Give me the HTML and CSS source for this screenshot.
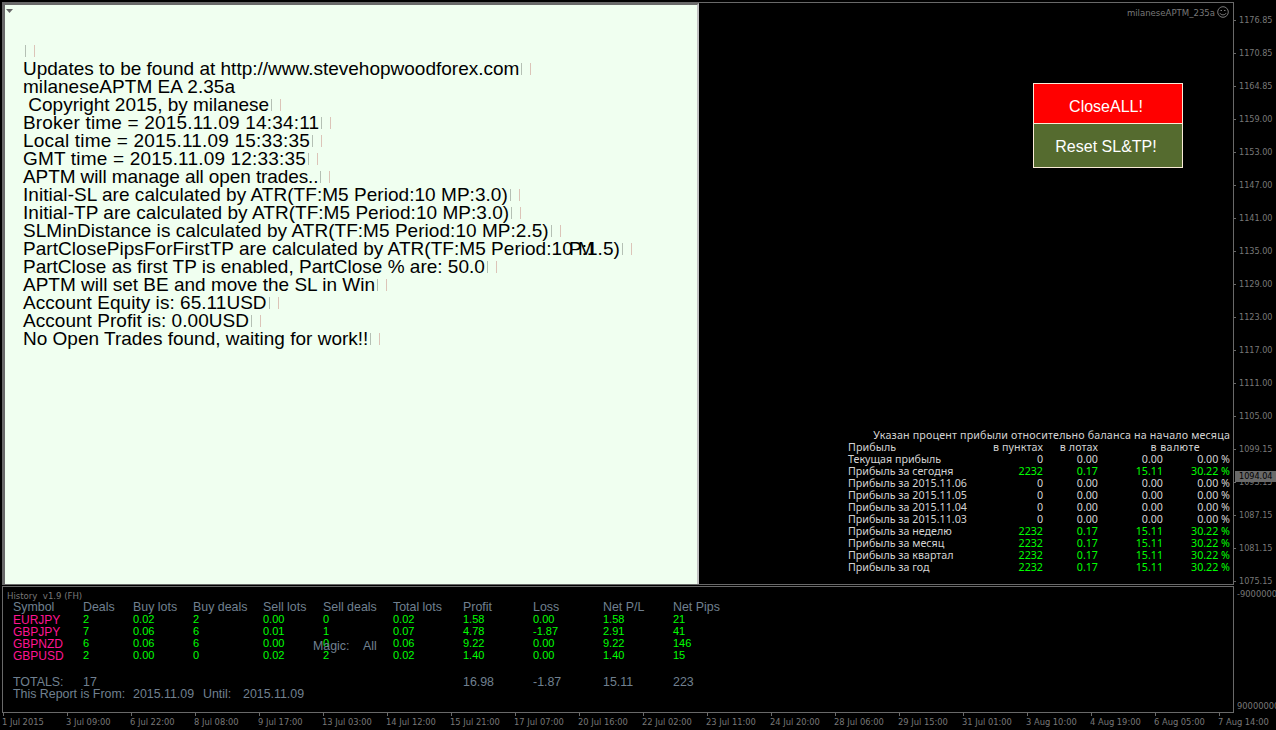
FILE: index.html
```
<!DOCTYPE html>
<html lang="en">
<head>
  <meta charset="UTF-8" />
  <title>milaneseAPTM_235a</title>
  <meta name="viewport" content="width=device-width, initial-scale=1.0" />
  <link rel="stylesheet" href="styles.css">
</head>
<body>
  <div class="terminal">
    <main class="chart">
      <section class="note">
        <svg class="note-arrow" width="7" height="4" viewBox="0 0 7 4"><path d="M0 0h7L3.5 4z" fill="#696969"/></svg>
        <p><i class="eol"></i></p>
        <p>Updates to be found at http://www.stevehopwoodforex.com<i class="eol"></i></p>
        <p class="loose">milaneseAPTM EA 2.35a</p>
        <p>&nbsp;Copyright 2015, by milanese<i class="eol"></i></p>
        <p class="wide">Broker time = 2015.11.09 14:34:11<i class="eol"></i></p>
        <p class="wide">Local time = 2015.11.09 15:33:35<i class="eol"></i></p>
        <p class="wide">GMT time = 2015.11.09 12:33:35<i class="eol"></i></p>
        <p class="tight">APTM will manage all open trades..<i class="eol"></i></p>
        <p class="loose">Initial-SL are calculated by ATR(TF:M5 Period:10 MP:3.0)<i class="eol"></i></p>
        <p class="loose">Initial-TP are calculated by ATR(TF:M5 Period:10 MP:3.0)<i class="eol"></i></p>
        <p class="loose">SLMinDistance is calculated by ATR(TF:M5 Period:10 MP:2.5)<i class="eol"></i></p>
        <p class="loose">PartClosePipsForFirstTP are calculated by ATR(TF:M5 Period:10 M<span class="overrun">P:1.5)</span><i class="eol"></i></p>
        <p>PartClose as first TP is enabled, PartClose % are: 50.0<i class="eol"></i></p>
        <p>APTM will set BE and move the SL in Win<i class="eol"></i></p>
        <p class="loose">Account Equity is: 65.11USD<i class="eol"></i></p>
        <p class="loose">Account Profit is: 0.00USD<i class="eol"></i></p>
        <p>No Open Trades found, waiting for work!!<i class="eol"></i></p>
      </section>

      <section class="side">
        <div class="expert">
          <span>milaneseAPTM_235a</span>
          <svg width="12" height="12" viewBox="0 0 12 12" fill="none" stroke="#787878">
            <circle cx="6" cy="6" r="5.3"/>
            <path d="M3 7.2c.8 2.2 5.2 2.2 6 0"/>
            <path d="M3.500 4.500h1.500M7 4.500h1.500" stroke-width="1.200"/>
          </svg>
        </div>

        <div class="buttons">
          <button class="close-all">CloseALL!</button>
          <button class="reset">Reset SL&amp;TP!</button>
        </div>

        <div class="profit">
          <div class="profit-title">Указан процент прибыли относительно баланса на начало месяца</div>
          <div class="profit-row head"><span>Прибыль</span><span>в пунктах</span><span>в лотах</span><span class="currency">в валюте</span></div>
          <div class="profit-row"><span>Текущая прибыль</span><span>0</span><span>0.00</span><span>0.00</span><span>0.00 %</span></div>
          <div class="profit-row up"><span>Прибыль за сегодня</span><span>2232</span><span>0.17</span><span>15.11</span><span>30.22 %</span></div>
          <div class="profit-row"><span>Прибыль за 2015.11.06</span><span>0</span><span>0.00</span><span>0.00</span><span>0.00 %</span></div>
          <div class="profit-row"><span>Прибыль за 2015.11.05</span><span>0</span><span>0.00</span><span>0.00</span><span>0.00 %</span></div>
          <div class="profit-row"><span>Прибыль за 2015.11.04</span><span>0</span><span>0.00</span><span>0.00</span><span>0.00 %</span></div>
          <div class="profit-row"><span>Прибыль за 2015.11.03</span><span>0</span><span>0.00</span><span>0.00</span><span>0.00 %</span></div>
          <div class="profit-row up"><span>Прибыль за неделю</span><span>2232</span><span>0.17</span><span>15.11</span><span>30.22 %</span></div>
          <div class="profit-row up"><span>Прибыль за месяц</span><span>2232</span><span>0.17</span><span>15.11</span><span>30.22 %</span></div>
          <div class="profit-row up"><span>Прибыль за квартал</span><span>2232</span><span>0.17</span><span>15.11</span><span>30.22 %</span></div>
          <div class="profit-row up"><span>Прибыль за год</span><span>2232</span><span>0.17</span><span>15.11</span><span>30.22 %</span></div>
        </div>
      </section>
    </main>

    <aside class="prices">
      <div>1176.85</div>
      <div>1170.85</div>
      <div>1164.85</div>
      <div>1159.00</div>
      <div>1153.00</div>
      <div>1147.00</div>
      <div>1141.00</div>
      <div>1135.00</div>
      <div>1129.00</div>
      <div>1123.00</div>
      <div>1117.00</div>
      <div>1111.00</div>
      <div>1105.00</div>
      <div>1099.15</div>
      <div>1093.15<span class="bid">1094.04</span></div>
      <div>1087.15</div>
      <div>1081.15</div>
      <div>1075.15</div>
    </aside>

    <section class="history">
      <div class="history-title">History&nbsp; v1.9 (FH)</div>
      <div class="deals head"><span>Symbol</span><span>Deals</span><span>Buy lots</span><span>Buy deals</span><span>Sell lots</span><span>Sell deals</span><span>Total lots</span><span>Profit</span><span>Loss</span><span>Net P/L</span><span>Net Pips</span></div>
      <div class="deals"><b>EURJPY</b><span>2</span><span>0.02</span><span>2</span><span>0.00</span><span>0</span><span>0.02</span><span>1.58</span><span>0.00</span><span>1.58</span><span>21</span></div>
      <div class="deals"><b>GBPJPY</b><span>7</span><span>0.06</span><span>6</span><span>0.01</span><span>1</span><span>0.07</span><span>4.78</span><span>-1.87</span><span>2.91</span><span>41</span></div>
      <div class="deals"><b>GBPNZD</b><span>6</span><span>0.06</span><span>6</span><span>0.00</span><span>0</span><span>0.06</span><span>9.22</span><span>0.00</span><span>9.22</span><span>146</span></div>
      <div class="deals"><b>GBPUSD</b><span>2</span><span>0.00</span><span>0</span><span>0.02</span><span>2</span><span>0.02</span><span>1.40</span><span>0.00</span><span>1.40</span><span>15</span></div>
      <div class="deals totals"><span>TOTALS:</span><span>17</span><span></span><span></span><span></span><span></span><span></span><span>16.98</span><span>-1.87</span><span>15.11</span><span>223</span></div>
      <div class="report"><span>This Report is From:</span><span>2015.11.09</span><span>Until:</span><span>2015.11.09</span></div>
      <div class="magic"><span>Magic:</span><span>All</span></div>
    </section>

    <aside class="range">
      <div>-90000000</div>
      <div>90000000</div>
    </aside>

    <footer class="times">
      <div>1 Jul 2015</div>
      <div>3 Jul 09:00</div>
      <div>6 Jul 22:00</div>
      <div>8 Jul 08:00</div>
      <div>9 Jul 17:00</div>
      <div>13 Jul 03:00</div>
      <div>14 Jul 12:00</div>
      <div>15 Jul 21:00</div>
      <div>17 Jul 07:00</div>
      <div>20 Jul 16:00</div>
      <div>22 Jul 02:00</div>
      <div>23 Jul 11:00</div>
      <div>24 Jul 20:00</div>
      <div>28 Jul 06:00</div>
      <div>29 Jul 15:00</div>
      <div>31 Jul 01:00</div>
      <div>3 Aug 10:00</div>
      <div>4 Aug 19:00</div>
      <div>6 Aug 05:00</div>
      <div>7 Aug 14:00</div>
    </footer>
  </div>
</body>
</html>
```
FILE: styles.css
```
* {
  box-sizing: border-box;
}

html, body {
  margin: 0;
  padding: 0;
  background: #000;
  overflow: hidden;
}

p {
  margin: 0;
}

.terminal {
  width: 1276px;
  height: 730px;
  padding: 2px 0 0 2px;
  display: grid;
  grid-template-columns: 1232px 1fr;
  grid-template-rows: 583px 127px 1fr;
  row-gap: 1px;
  font: 9.25px "DejaVu Sans Condensed", "DejaVu Sans", sans-serif;
  color: #787878;
  overflow: hidden;
  white-space: nowrap;
}

.chart {
  display: flex;
  border: 1px solid #696969;
}

/* comment panel */
.note {
  position: relative;
  width: 696px;
  padding: 37px 0 0 18px;
  background: #f0fff0;
  border: 2px solid #696969;
  border-right-color: #c0c0c0;
  border-bottom: 0;
  font: 19px/18px "Liberation Sans", Arial, sans-serif;
  color: #000;
}

.note p {
  display: flex;
  height: 18px;
}

.note .wide {
  letter-spacing: 0.18px;
}

.note .loose {
  letter-spacing: 0.04px;
}

.note .tight {
  letter-spacing: -0.1px;
}

.note-arrow {
  position: absolute;
  top: 4px;
  left: 1px;
}

.eol {
  width: 10px;
  height: 12px;
  margin: 3px 0 0 2px;
  border-left: 1px solid #b4c0b4;
  border-right: 1px solid #dcc4b8;
}

/* second text chunk starts before the first one ends */
.overrun {
  margin-left: -25px;
}

/* right part of the chart */
.side {
  flex: 1;
  display: flex;
  flex-direction: column;
  align-items: flex-end;
}

.expert {
  display: flex;
  align-items: center;
  gap: 2px;
  height: 12px;
  margin: 3px 4px 0 0;
  font-size: 9.5px;
}

.buttons {
  display: flex;
  flex-direction: column;
  width: 150px;
  margin: 65px 50px 0 0;
  border: 1px solid #faebd7;
}

.buttons button {
  margin: 0;
  border: 0;
  font: 16px "Liberation Sans", Arial, sans-serif;
  color: #fff;
}

.close-all {
  height: 39px;
  padding: 6px 4px 0 0;
  background: #f00;
}

.buttons .reset {
  height: 44px;
  padding: 2px 4px 0 0;
  background: #556b2f;
  border-top: 1px solid #faebd7;
}

.profit {
  width: 382px;
  margin: auto 3px 11px 0;
  font: 10.7px/12px "Noto Sans", "Open Sans", sans-serif;
  color: #d3d3d3;
}

.profit-title {
  text-align: right;
  letter-spacing: 0.16px;
}

.profit-row {
  display: grid;
  grid-template-columns: 140px 55px 55px 65px 67px;
  height: 12px;
  text-align: right;
}

.profit-row span:first-child {
  text-align: left;
}

.profit-row.head {
  letter-spacing: 0.1px;
}

.profit-row .currency {
  grid-column: 4 / 6;
  padding-right: 30px;
  letter-spacing: 0.4px;
}

.profit-row.up span:not(:first-child) {
  color: #0f0;
}

/* price scale */
.prices {
  padding-top: 2px;
  font-size: 9px;
}

.prices div {
  position: relative;
  height: 33px;
  padding-left: 5px;
  line-height: 33px;
}

.prices div::before {
  content: "";
  position: absolute;
  left: 0;
  top: 16px;
  width: 2px;
  height: 1px;
  background: #696969;
}

.prices .bid {
  position: absolute;
  left: 1px;
  top: 5px;
  width: 41px;
  height: 11px;
  padding-left: 4px;
  line-height: 11px;
  background: #696969;
  color: #000;
}

/* history window */
.history {
  position: relative;
  border: 1px solid #696969;
  padding: 3px 0 0 10px;
  font: 12.4px/12px "Liberation Sans", Arial, sans-serif;
  color: #708090;
}

.history-title {
  height: 11px;
  margin-left: -6px;
  font: 9.5px/12px "DejaVu Sans Condensed", "DejaVu Sans", sans-serif;
  color: #787878;
}

.deals {
  display: grid;
  grid-template-columns: 70px 50px 60px 70px 60px 70px 70px 70px 70px 70px 70px;
  height: 12px;
  font-size: 11px;
  color: #0f0;
}

.deals b {
  padding-top: 1px;
  font-size: 12px;
  font-weight: normal;
  color: #ff1493;
}

.deals.head, .deals.totals {
  font-size: 12.4px;
  color: #708090;
}

.deals.totals {
  margin-top: 15px;
}

.report {
  display: grid;
  grid-template-columns: 120px 70px 40px 70px;
}

.magic {
  position: absolute;
  left: 310px;
  top: 53px;
  display: grid;
  grid-template-columns: 50px 20px;
}

.range {
  display: flex;
  flex-direction: column;
  justify-content: space-between;
  padding: 2px 0 2px 3px;
  line-height: 11px;
  overflow: hidden;
}

/* time scale */
.times {
  grid-column: 1 / 3;
  display: grid;
  grid-template-columns: repeat(20, 64px);
  margin-top: -1px;
}

.times div {
  position: relative;
  line-height: 17px;
}

.times div::before {
  content: "";
  position: absolute;
  left: 1px;
  top: 0;
  width: 1px;
  height: 3px;
  background: #696969;
}
```
